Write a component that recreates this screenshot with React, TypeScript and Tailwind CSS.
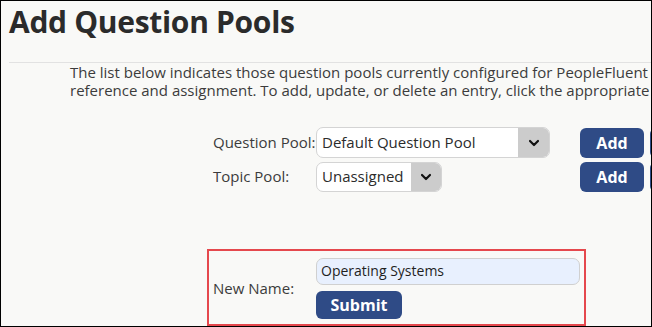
import React from "react";

function Chevron() {
  return (
    <svg width="12" height="8" viewBox="0 0 12 8" fill="none">
      <path d="M2 2l4 4 4-4" stroke="#111" strokeWidth="2.2" strokeLinecap="round" strokeLinejoin="round" />
    </svg>
  );
}

export default function App() {
  return (
    <div
      className="w-[652px] h-[327px] border border-black bg-[#f9f9f7] overflow-hidden text-[#3a3a3a]"
      style={{ fontFamily: '"Open Sans", "Noto Sans", sans-serif' }}
    >
      <h1 className="ml-[8px] mt-[1px] text-[30px] leading-[40px] font-bold tracking-[-0.3px] text-[#2b2b2b] whitespace-nowrap">
        Add Question Pools
      </h1>
      <div className="ml-[8px] mt-[20px] h-px bg-[#e2e2e2]" />
      <p className="ml-[69px] text-[15px] leading-[18px] text-[#3c3c3c] whitespace-nowrap">
        The list below indicates those question pools currently configured for PeopleFluent
        <br />
        reference and assignment. To add, update, or delete an entry, click the appropriate
      </p>

      <div className="ml-[212px] mt-[28px] flex flex-col gap-[3px] w-[460px]">
        <div className="flex items-center h-[31px]">
          <span className="shrink-0 w-[103px] text-[15px] text-[#3c3c3c] whitespace-nowrap">Question Pool:</span>
          <div className="shrink-0 flex h-[31px] w-[234px] rounded-[7px] border border-[#d4d4d4] bg-white overflow-hidden">
            <span className="flex-1 pl-[5px] text-[15px] leading-[28px] text-[#2b2b2b] whitespace-nowrap">Default Question Pool</span>
            <span className="w-[31px] bg-[#cccccc] flex items-center justify-center">
              <Chevron />
            </span>
          </div>
          <button className="shrink-0 ml-[30px] h-[30px] w-[64px] rounded-[6px] bg-[#2f4b86] text-white text-[16px] font-bold">
            Add
          </button>
          <span className="shrink-0 ml-[6px] h-[30px] w-[10px] rounded-l-[6px] bg-[#2f4b86]" />
        </div>
        <div className="flex items-center h-[31px]">
          <span className="shrink-0 w-[103px] text-[15px] text-[#3c3c3c] whitespace-nowrap">Topic Pool:</span>
          <div className="shrink-0 flex h-[30px] w-[126px] rounded-[7px] border border-[#d4d4d4] bg-white overflow-hidden">
            <span className="flex-1 pl-[5px] text-[15px] leading-[27px] text-[#2b2b2b] whitespace-nowrap">Unassigned</span>
            <span className="w-[30px] bg-[#cccccc] flex items-center justify-center">
              <Chevron />
            </span>
          </div>
          <button className="shrink-0 ml-[138px] h-[30px] w-[64px] rounded-[6px] bg-[#2f4b86] text-white text-[16px] font-bold">
            Add
          </button>
          <span className="shrink-0 ml-[6px] h-[30px] w-[10px] rounded-l-[6px] bg-[#2f4b86]" />
        </div>
      </div>

      <div className="ml-[206px] mt-[57px] w-[379px] h-[77px] border-2 border-[#e5484d] flex items-center pl-[4px]">
        <span className="shrink-0 w-[103px] text-[15px] text-[#3c3c3c] mt-[2px]">New Name:</span>
        <div className="flex flex-col gap-[6px] pt-[1px]">
          <div className="h-[27px] w-[264px] rounded-[7px] border border-[#d0d0d0] bg-[#e8f0fe] pl-[4px] text-[14px] leading-[24px] text-[#1f1f1f]">
            Operating Systems
          </div>
          <button className="h-[28px] w-[86px] rounded-[6px] bg-[#2f4b86] text-white text-[16px] font-bold">
            Submit
          </button>
        </div>
      </div>
    </div>
  );
}
